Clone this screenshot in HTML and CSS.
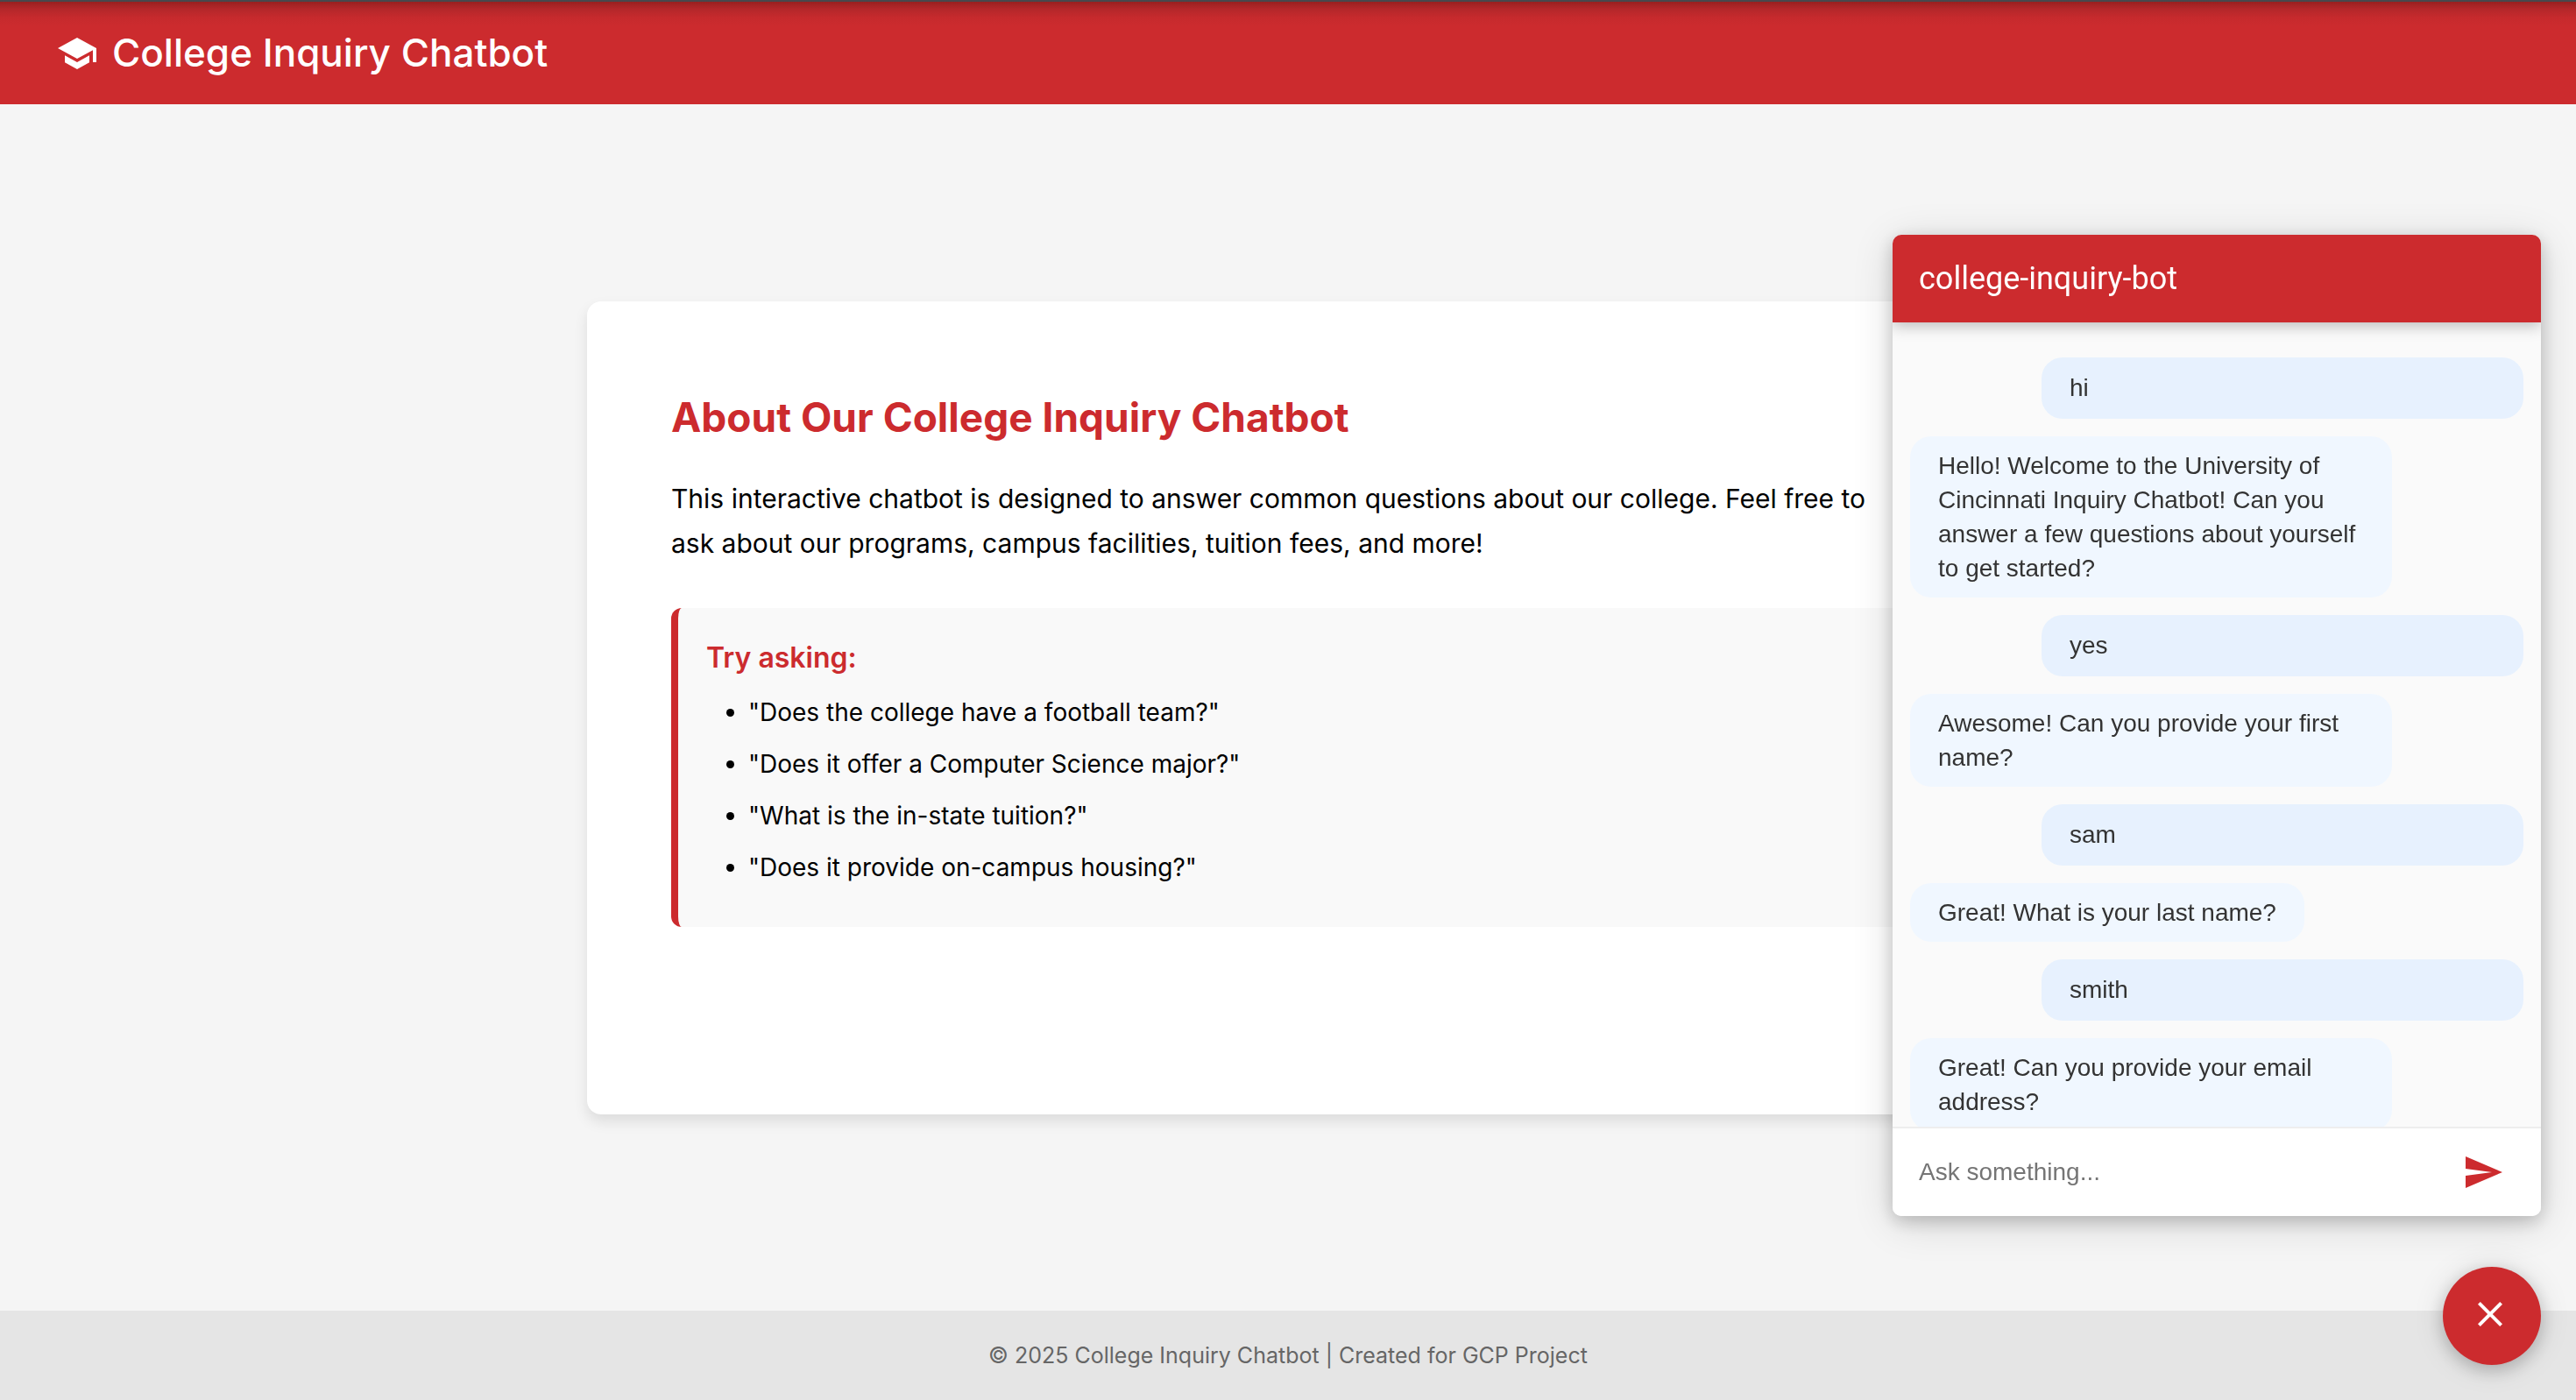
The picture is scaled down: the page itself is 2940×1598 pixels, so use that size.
FILE: index.html
```html
<!DOCTYPE html>
<html lang="en">
<head>
<meta charset="utf-8">
<title>College Inquiry Chatbot</title>
<link rel="stylesheet" href="styles.css">
</head>
<body>
<header class="site-header">
  <svg class="icon" viewBox="0 0 24 24" aria-hidden="true"><path d="M5 13.18v4L12 21l7-3.82v-4L12 17l-7-3.82zM12 3L1 9l11 6 9-4.91V17h2V9L12 3z"/></svg>
  <h1 class="site-title">College Inquiry Chatbot</h1>
</header>

<main class="content">
  <section class="card">
    <h2 class="card-title">About Our College Inquiry Chatbot</h2>
    <p class="card-text">This interactive chatbot is designed to answer common questions about our college. Feel free to ask about our programs, campus facilities, tuition fees, and more!</p>
    <div class="examples">
      <h3 class="examples-title">Try asking:</h3>
      <ul class="examples-list">
        <li>"Does the college have a football team?"</li>
        <li>"Does it offer a Computer Science major?"</li>
        <li>"What is the in-state tuition?"</li>
        <li>"Does it provide on-campus housing?"</li>
      </ul>
    </div>
  </section>
</main>

<footer class="site-footer">© 2025 College Inquiry Chatbot | Created for GCP Project</footer>

<section class="chat" aria-label="Chat">
  <header class="chat-header">college-inquiry-bot</header>
  <div class="chat-log">
    <p class="message user">hi</p>
    <p class="message bot">Hello! Welcome to the University of Cincinnati Inquiry Chatbot! Can you answer a few questions about yourself to get started?</p>
    <p class="message user">yes</p>
    <p class="message bot">Awesome! Can you provide your first name?</p>
    <p class="message user">sam</p>
    <p class="message bot">Great! What is your last name?</p>
    <p class="message user">smith</p>
    <p class="message bot">Great! Can you provide your email address?</p>
  </div>
  <form class="chat-form">
    <input class="chat-input" type="text" placeholder="Ask something..." aria-label="Ask something">
    <button class="send" type="button" aria-label="Send"><svg class="icon" viewBox="0 0 24 24" aria-hidden="true"><path d="M2.01 21L23 12 2.01 3 2 10l15 2-15 2z"/></svg></button>
  </form>
</section>

<button class="chat-toggle" type="button" aria-label="Close chat"><svg class="icon" viewBox="0 0 24 24" aria-hidden="true"><path d="M19 6.41L17.59 5 12 10.59 6.41 5 5 6.41 10.59 12 5 17.59 6.41 19 12 13.41 17.59 19 19 17.59 13.41 12z"/></svg></button>
</body>
</html>
```

FILE: styles.css
```css
* {
  box-sizing: border-box;
}

:root {
  --red: #cc2b2e;
}

body {
  margin: 0;
  min-height: 100vh;
  display: flex;
  flex-direction: column;
  background: #f5f5f5;
  color: #000;
  font-family: Inter, "Liberation Sans", sans-serif;
  line-height: 1.6;
}

h1, h2, h3, p, ul {
  margin: 0;
}

.icon {
  display: block;
  flex: none;
  width: 48px;
  height: 48px;
  fill: currentColor;
}

.site-header {
  display: flex;
  align-items: center;
  gap: 16px;
  padding: 20px 64px;
  border-top: 2px solid #48484d;
  background: linear-gradient(#98201f, #b3272a 8px, #c62a2d 18px, var(--red) 28px);
  color: #fff;
}

.site-title {
  font-size: 44px;
  line-height: 77px;
  font-weight: 500;
}

.content {
  flex: 1;
  display: flex;
  align-items: center;
  justify-content: center;
}

.card {
  width: 100%;
  max-width: 1600px;
  padding: 94px 96px 214px;
  border-radius: 16px;
  background: #fff;
  box-shadow: 0 8px 16px rgba(0, 0, 0, 0.1);
}

.card-title {
  margin-bottom: 29px;
  color: var(--red);
  font-size: 46px;
  line-height: 77px;
  font-weight: 700;
}

.card-text {
  margin-bottom: 48px;
  font-size: 30px;
  line-height: 51px;
}

.examples {
  padding: 31px 32px 32px;
  border-left: 8px solid var(--red);
  border-radius: 12px;
  background: #f9f9f9;
}

.examples-title {
  margin-bottom: 14px;
  color: var(--red);
  font-size: 32px;
  line-height: 51px;
  font-weight: 600;
}

.examples-list {
  padding-left: 48px;
  font-size: 28px;
  line-height: 46px;
}

.examples-list li {
  margin-bottom: 13px;
}

.site-footer {
  padding: 30px;
  background: #e5e5e5;
  color: #666;
  font-size: 25px;
  line-height: 42px;
  text-align: center;
}

.chat {
  position: fixed;
  right: 40px;
  bottom: 210px;
  width: 740px;
  height: 1120px;
  max-height: calc(100vh - 250px);
  display: flex;
  flex-direction: column;
  overflow: hidden;
  border-radius: 10px;
  background: #fafafa;
  box-shadow: 0 6px 20px rgba(0, 0, 0, 0.2), 0 8px 48px rgba(0, 0, 0, 0.14);
  font-family: "Liberation Sans", sans-serif;
}

.chat-header {
  position: relative;
  padding: 25px 30px;
  background: var(--red);
  box-shadow: 0 4px 16px rgba(0, 0, 0, 0.25);
  color: #fff;
  font-family: Roboto, sans-serif;
  font-size: 36px;
  line-height: 50px;
}

.chat-log {
  flex: 1;
  min-height: 0;
  display: flex;
  flex-direction: column;
  gap: 20px;
  padding: 40px 20px 0;
  overflow: hidden;
}

.message {
  flex: none;
  max-width: 550px;
  padding: 14px 32px;
  border-radius: 24px;
  color: #333;
  font-size: 28px;
  line-height: 39px;
}

.user {
  align-self: flex-end;
  width: 550px;
  padding: 15px 32px 16px;
  background: #e7f1fe;
}

.bot {
  align-self: flex-start;
  background: #f0f7ff;
}

.chat-form {
  display: flex;
  align-items: center;
  padding: 26px 42px 26px 30px;
  border-top: 2px solid #eee;
  background: #fff;
}

.chat-input {
  flex: 1;
  min-width: 0;
  padding: 0;
  border: 0;
  outline: 0;
  background: transparent;
  color: #333;
  font: 28px/40px "Liberation Sans", sans-serif;
}

.chat-input::placeholder {
  color: #757575;
  opacity: 1;
}

.send {
  padding: 0;
  border: 0;
  background: none;
  color: var(--red);
}

.chat-toggle {
  position: fixed;
  right: 40px;
  bottom: 40px;
  width: 112px;
  height: 112px;
  display: grid;
  place-items: center;
  padding: 0 4px 4px 0;
  border: 0;
  border-radius: 50%;
  background: var(--red);
  box-shadow: 0 6px 20px rgba(0, 0, 0, 0.2), 0 2px 36px rgba(0, 0, 0, 0.12);
  color: #fff;
}
```
